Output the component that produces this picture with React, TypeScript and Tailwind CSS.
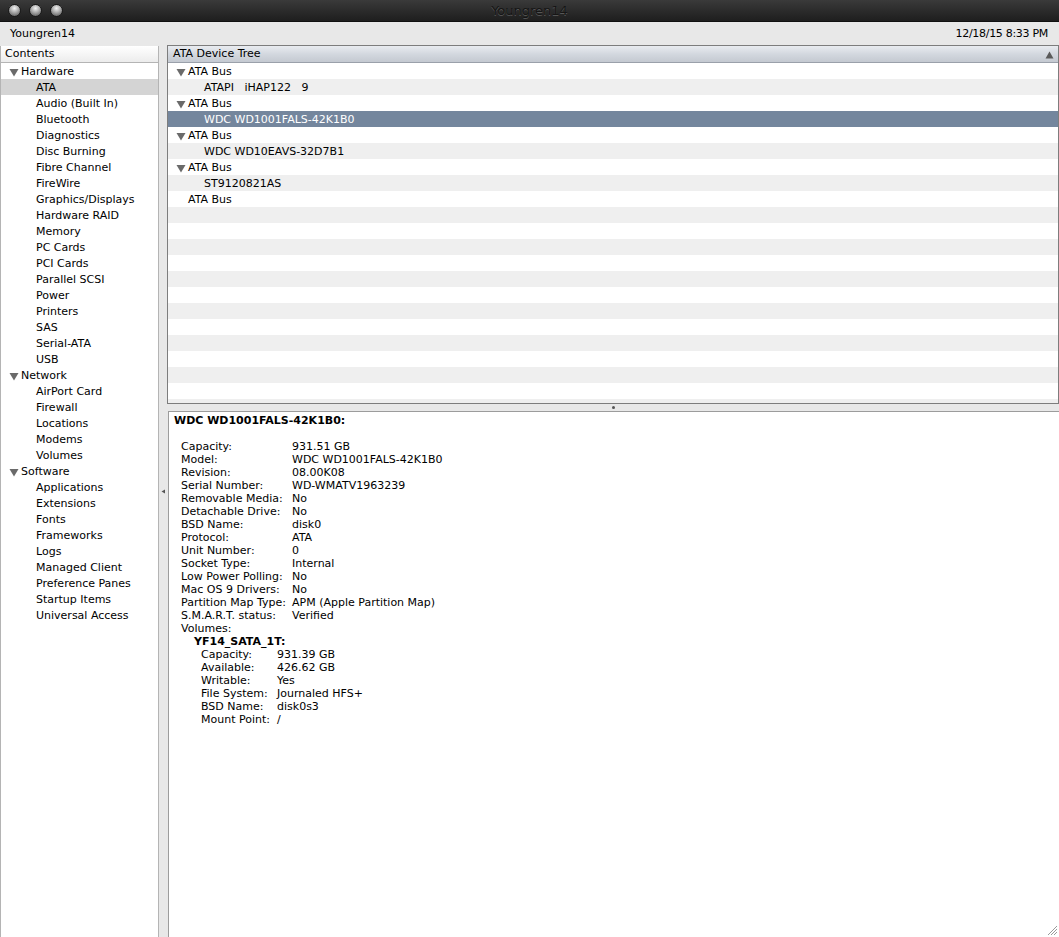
import React from 'react';

const font = { fontFamily: '"DejaVu Sans", "Liberation Sans", sans-serif' };

const Disclosure = () => (
  <svg width="10" height="9" viewBox="0 0 10 9" className="mr-[2px] shrink-0">
    <path d="M0.5 1h9L5 8.5z" fill="#6a6a6a" />
  </svg>
);

const sidebar: { label: string; items: string[] }[] = [
  {
    label: 'Hardware',
    items: [
      'ATA',
      'Audio (Built In)',
      'Bluetooth',
      'Diagnostics',
      'Disc Burning',
      'Fibre Channel',
      'FireWire',
      'Graphics/Displays',
      'Hardware RAID',
      'Memory',
      'PC Cards',
      'PCI Cards',
      'Parallel SCSI',
      'Power',
      'Printers',
      'SAS',
      'Serial-ATA',
      'USB',
    ],
  },
  { label: 'Network', items: ['AirPort Card', 'Firewall', 'Locations', 'Modems', 'Volumes'] },
  {
    label: 'Software',
    items: [
      'Applications',
      'Extensions',
      'Fonts',
      'Frameworks',
      'Logs',
      'Managed Client',
      'Preference Panes',
      'Startup Items',
      'Universal Access',
    ],
  },
];

type TreeRow = { text: string; bus?: boolean; arrow?: boolean; selected?: boolean };

const tree: TreeRow[] = [
  { text: 'ATA Bus', bus: true, arrow: true },
  { text: 'ATAPI   iHAP122   9' },
  { text: 'ATA Bus', bus: true, arrow: true },
  { text: 'WDC WD1001FALS-42K1B0', selected: true },
  { text: 'ATA Bus', bus: true, arrow: true },
  { text: 'WDC WD10EAVS-32D7B1' },
  { text: 'ATA Bus', bus: true, arrow: true },
  { text: 'ST9120821AS' },
  { text: 'ATA Bus', bus: true },
];

const details: [string, string][] = [
  ['Capacity:', '931.51 GB'],
  ['Model:', 'WDC WD1001FALS-42K1B0'],
  ['Revision:', '08.00K08'],
  ['Serial Number:', 'WD-WMATV1963239'],
  ['Removable Media:', 'No'],
  ['Detachable Drive:', 'No'],
  ['BSD Name:', 'disk0'],
  ['Protocol:', 'ATA'],
  ['Unit Number:', '0'],
  ['Socket Type:', 'Internal'],
  ['Low Power Polling:', 'No'],
  ['Mac OS 9 Drivers:', 'No'],
  ['Partition Map Type:', 'APM (Apple Partition Map)'],
  ['S.M.A.R.T. status:', 'Verified'],
];

const volume: [string, string][] = [
  ['Capacity:', '931.39 GB'],
  ['Available:', '426.62 GB'],
  ['Writable:', 'Yes'],
  ['File System:', 'Journaled HFS+'],
  ['BSD Name:', 'disk0s3'],
  ['Mount Point:', '/'],
];

const Light = () => (
  <span className="h-[13px] w-[13px] rounded-full border border-[#1a1a1a] bg-[radial-gradient(circle_at_50%_30%,#f4f4f4_0%,#a9a9a9_45%,#6c6c6c_80%,#8a8a8a_100%)]" />
);

export default function App() {
  return (
    <div style={font} className="flex h-[937px] w-[1059px] flex-col overflow-hidden bg-[#e8e8e8] text-[11px] text-black">
      {/* title bar */}
      <div className="relative flex h-[22px] shrink-0 items-center border-b border-[#111] bg-gradient-to-b from-[#3a3a3a] to-[#1e1e1e] pl-[8px]">
        <div className="flex gap-[8px]">
          <Light />
          <Light />
          <Light />
        </div>
        <div className="absolute inset-x-0 top-0 flex h-[21px] items-center justify-center text-[13px] text-[#151515] [text-shadow:0_1px_0_rgba(255,255,255,0.22)]">
          Youngren14
        </div>
      </div>

      {/* info bar */}
      <div className="flex h-[23px] shrink-0 items-center justify-between pl-[10px] pr-[11px] pt-px">
        <span>Youngren14</span>
        <span className="tracking-[-0.3px]">12/18/15 8:33 PM</span>
      </div>

      <div className="flex min-h-0 flex-1">
        {/* sidebar */}
        <div className="mt-px flex w-[159px] shrink-0 flex-col border-x border-[#b4b4b4] bg-white">
          <div className="flex h-[17px] items-center border-b border-[#b4b4b4] bg-gradient-to-b from-[#ffffff] to-[#ececec] pl-[4px] pt-px">
            Contents
          </div>
          {sidebar.map((g) => (
            <div key={g.label}>
              <div className="flex h-[16px] items-center pl-[8px] pt-[2px]">
                <Disclosure />
                {g.label}
              </div>
              {g.items.map((it) => (
                <div
                  key={it}
                  className={`flex h-[16px] items-center pl-[35px] pt-[2px] ${it === 'ATA' ? 'bg-[#d4d4d4]' : ''}`}
                >
                  {it}
                </div>
              ))}
            </div>
          ))}
        </div>

        {/* vertical splitter */}
        <div className="flex w-[8px] shrink-0 items-center justify-center">
          <svg width="5" height="5" viewBox="0 0 5 5">
            <path d="M4 0.5L0.5 2.5 4 4.5z" fill="#555" />
          </svg>
        </div>

        <div className="flex min-w-0 flex-1 flex-col">
          {/* tree */}
          <div className="flex h-[359px] shrink-0 flex-col border border-[#7d7d7d] bg-white shadow-[inset_0_1px_2px_rgba(0,0,0,0.25)]">
            <div className="flex h-[17px] shrink-0 items-center justify-between border-b border-[#9aa0aa] bg-gradient-to-b from-[#e9ecf0] via-[#d3d8df] to-[#c4c9d1] pl-[5px] pr-[4px] pt-px">
              <span>ATA Device Tree</span>
              <svg width="9" height="8" viewBox="0 0 9 8">
                <path d="M4.5 0.5L8.5 7.5h-8z" fill="#5a5a5a" />
              </svg>
            </div>
            <div className="flex-1 overflow-hidden">
              {Array.from({ length: 22 }).map((_, i) => {
                const row = tree[i];
                const bg = row?.selected ? 'bg-[#74869d] text-white' : i % 2 === 1 ? 'bg-[#efefef]' : 'bg-white';
                return (
                  <div key={i} className={`flex h-[16px] items-center whitespace-pre pt-[2px] ${bg}`}>
                    {row && row.bus && (
                      <div className="flex items-center pl-[8px]">
                        {row.arrow ? <Disclosure /> : <span className="w-[12px]" />}
                        {row.text}
                      </div>
                    )}
                    {row && !row.bus && <div className="pl-[36px]">{row.text}</div>}
                  </div>
                );
              })}
            </div>
          </div>

          {/* horizontal splitter */}
          <div className="flex h-[7px] shrink-0 items-center justify-center">
            <span className="h-[3px] w-[3px] rounded-full bg-[#555]" />
          </div>

          {/* details */}
          <div className="relative ml-px flex-1 border-l border-t border-[#9c9c9c] bg-white pl-[5px] pt-[2px] leading-[13px]">
            <div className="font-bold">WDC WD1001FALS-42K1B0:</div>
            <div className="h-[13px]" />
            <div className="pl-[7px]">
              {details.map(([k, v]) => (
                <div key={k} className="flex">
                  <span className="w-[111px] shrink-0">{k}</span>
                  <span>{v}</span>
                </div>
              ))}
              <div>Volumes:</div>
              <div className="pl-[13px] font-bold">YF14_SATA_1T:</div>
              <div className="pl-[20px]">
                {volume.map(([k, v]) => (
                  <div key={k} className="flex">
                    <span className="w-[76px] shrink-0">{k}</span>
                    <span>{v}</span>
                  </div>
                ))}
              </div>
            </div>
            <svg width="12" height="12" viewBox="0 0 12 12" className="absolute bottom-[1px] right-[1px]">
              <path d="M11 2L2 11M11 5L5 11M11 8L8 11" stroke="#9a9a9a" strokeWidth="1" />
            </svg>
          </div>
        </div>
      </div>
    </div>
  );
}
